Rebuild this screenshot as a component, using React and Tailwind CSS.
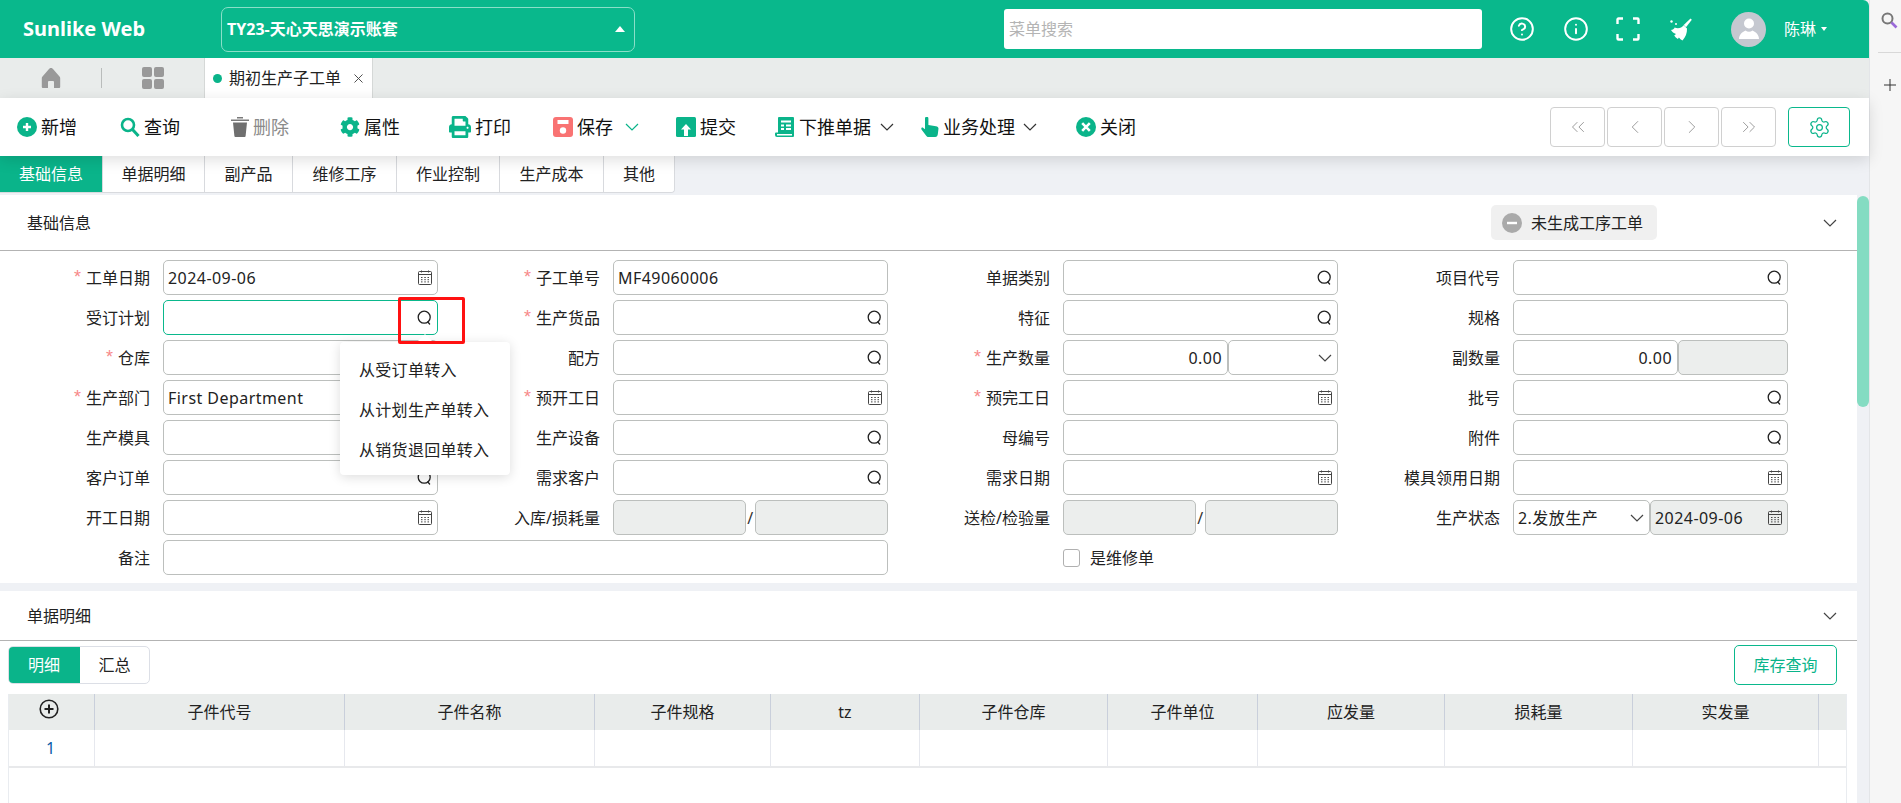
import React from 'react'
import { ChevronLeft, ChevronRight, ChevronsLeft, ChevronsRight, CircleHelp, Info, Settings, X } from 'lucide-react'
import { FaCog, FaPrint } from 'react-icons/fa'

const Chev = ({ color = '#333', className = '' }) => (
  <svg width="14" height="8" viewBox="0 0 14 8" fill="none" stroke={color} strokeWidth="1.2" className={`shrink-0 ${className}`}>
    <path d="M1 1l6 6 6-6" />
  </svg>
)

const SearchGlyph = () => (
  <svg width="15" height="15" viewBox="0 0 15 15" fill="none" stroke="#222" strokeWidth="1.3" className="shrink-0">
    <circle cx="7.200" cy="7.200" r="6" />
    <path d="M10.800 12l1.800 2" strokeLinecap="round" />
  </svg>
)

const CalendarGlyph = () => (
  <svg width="14" height="15" viewBox="0 0 14 15" fill="none" stroke="#444" strokeWidth="1" className="shrink-0">
    <rect x="0.500" y="1.500" width="13" height="13" rx="1" />
    <path d="M0.500 4.500h13M3.500 0.500v2M10.500 0.500v2" />
    <path d="M3 7.500h1.500M6.300 7.500h1.500M9.500 7.500h1.500M3 9.700h1.500M6.300 9.700h1.500M9.500 9.700h1.500M3 11.900h1.500M6.300 11.900h1.500M9.500 11.900h1.500" />
  </svg>
)

// toolbar icons
const IconAdd = () => (
  <svg width="20" height="20" viewBox="0 0 20 20">
    <circle cx="10" cy="10" r="10" fill="#0ab48a" />
    <path d="M10 6v8M6 10h8" stroke="#fff" strokeWidth="2.400" />
  </svg>
)
const IconQuery = () => (
  <svg width="20" height="20" viewBox="0 0 20 20" fill="none" stroke="#0ab48a">
    <circle cx="8" cy="8" r="6" strokeWidth="2.600" />
    <path d="M12.500 12.500l6 6.500" strokeWidth="3" />
  </svg>
)
const IconTrash = () => (
  <svg width="18" height="20" viewBox="0 0 18 20">
    <path d="M0 2.500h18v1.600H0zM6 0h6v1.600H6z" fill="#7a7a7a" />
    <path d="M2 5.500h14l-1.400 13.400a1 1 0 01-1 1H4.400a1 1 0 01-1-1z" fill="#6f6f6f" />
  </svg>
)
const IconSave = () => (
  <svg width="20" height="20" viewBox="0 0 20 20">
    <rect width="20" height="20" rx="3" fill="#f97373" />
    <rect x="4.500" y="3" width="11" height="4" fill="#fff" />
    <circle cx="10" cy="13.500" r="3.200" fill="#fff" />
  </svg>
)
const IconSubmit = () => (
  <svg width="20" height="20" viewBox="0 0 20 20">
    <rect width="20" height="20" rx="1.500" fill="#0ab48a" />
    <path d="M10 7l5 5.500h-3V19H8v-6.500H5z" fill="#fff" />
  </svg>
)
const IconPush = () => (
  <svg width="20" height="20" viewBox="0 0 20 20">
    <path d="M4 0h14a1 1 0 011 1v18a1 1 0 01-1 1H2a2 2 0 01-2-2v-1.500a1 1 0 011-1h2V1a1 1 0 011-1z" fill="#0ab48a" />
    <path d="M6 3.500h10v2H6zM6 7.500h3v2H6zM11 7.500h5v2h-5zM6 11h3v2H6zM11 11h5v2h-5zM2 17h15v1.400H2z" fill="#fff" />
  </svg>
)
const IconHand = () => (
  <svg width="18" height="20" viewBox="0 0 18 20">
    <path d="M4 1.500a1.700 1.700 0 013.400 0V8l7.600 1.200c1.400.3 2.500 1 2.500 2.400l-.7 5.600c-.2 1.600-1 2.800-2.600 2.800H7.500c-1 0-1.700-.5-2.300-1.300L.5 12.500c-.8-1.200.6-2.600 1.800-1.600L4 12.200z" fill="#0ab48a" />
  </svg>
)
const IconClose = () => (
  <svg width="20" height="20" viewBox="0 0 20 20">
    <circle cx="10" cy="10" r="10" fill="#0ab48a" />
    <path d="M6.200 6.200l7.600 7.600M13.800 6.200l-7.600 7.600" stroke="#fff" strokeWidth="2.600" />
  </svg>
)

const toolbar = [
  { w: 'w-[103px]', icon: <IconAdd />, label: '新增' },
  { w: 'w-[111px]', icon: <IconQuery />, label: '查询' },
  { w: 'w-[109px]', icon: <IconTrash />, label: '删除', muted: true },
  { w: 'w-[109px]', icon: <FaCog size={20} color="#0ab48a" />, label: '属性' },
  { w: 'w-[104px]', icon: <FaPrint size={22} color="#0ab48a" />, label: '打印' },
  { w: 'w-[123px]', icon: <IconSave />, label: '保存', caret: <Chev color="#0ab48a" className="ml-[8px]" /> },
  { w: 'w-[99px]', icon: <IconSubmit />, label: '提交' },
  { w: 'w-[146px]', icon: <IconPush />, label: '下推单据', caret: <Chev className="ml-[5px]" /> },
  { w: 'w-[155px]', icon: <IconHand />, label: '业务处理', caret: <Chev className="ml-[4px]" /> },
  { w: 'w-[70px]', icon: <IconClose />, label: '关闭' },
]

const pageTabs = [
  { label: '基础信息', w: 'w-[102px]', active: true },
  { label: '单据明细', w: 'w-[102px]' },
  { label: '副产品', w: 'w-[88px]' },
  { label: '维修工序', w: 'w-[104px]' },
  { label: '作业控制', w: 'w-[103px]' },
  { label: '生产成本', w: 'w-[104px]' },
  { label: '其他', w: 'w-[71px]' },
]

const columns = [
  { w: 'w-[250px]', label: '子件代号' },
  { w: 'w-[250px]', label: '子件名称' },
  { w: 'w-[176px]', label: '子件规格' },
  { w: 'w-[149px]', label: 'tz' },
  { w: 'w-[188px]', label: '子件仓库' },
  { w: 'w-[150px]', label: '子件单位' },
  { w: 'w-[187px]', label: '应发量' },
  { w: 'w-[188px]', label: '损耗量' },
  { w: 'w-[186px]', label: '实发量' },
  { w: 'flex-1', label: '' },
]

const Box = ({ value, icon, disabled, focus, right, className = 'flex-1' }) => (
  <div
    className={`${className} h-[35px] min-w-0 flex items-center pl-1 pr-[5px] rounded-[5px] border ${focus ? 'border-[#0ab88c]' : 'border-[#bcbfbd]'} ${disabled ? 'bg-[#eceeed]' : 'bg-white'}`}
  >
    <input
      readOnly
      defaultValue={value}
      className={`flex-1 min-w-0 bg-transparent outline-none text-[#222] tracking-[0.45px] ${right ? 'text-right' : ''}`}
    />
    {icon === 'search' && <SearchGlyph />}
    {icon === 'date' && <CalendarGlyph />}
    {icon === 'select' && <Chev color="#444" />}
  </div>
)

const Field = ({ label, req, span, children }) => (
  <div className={`flex items-center h-[35px] ${span ? 'col-span-2' : ''}`}>
    <div className="w-[150px] shrink-0 flex justify-end items-center text-[#222] whitespace-nowrap">
      {req && <span className="text-[#f78989] text-[18px] mr-[5px] font-['Liberation_Sans',sans-serif]">*</span>}
      {label}
    </div>
    <div className={`ml-[13px] flex items-center relative ${span ? 'w-[725px]' : 'w-[274.5px]'}`}>{children}</div>
  </div>
)

const Split = () => (
  <>
    <Box disabled className="w-[133px]" />
    <span className="w-[8.5px] text-center text-[#333]">/</span>
    <Box disabled className="w-[133px]" />
  </>
)

const OrderPlanField = () => (
  <Field label="受订计划">
    <Box focus icon="search" />
    {/* the popover hanging off the search icon */}
    <div className="absolute left-[177px] top-[42px] z-20 w-[170px] h-[133px] bg-white rounded-[4px] shadow-[0_2px_12px_rgba(0,0,0,0.14)] py-[8px] px-[19px] text-[#222] tracking-[0.3px]">
      <div className="absolute -top-[8px] left-[77px] w-0 h-0 border-x-[8px] border-x-transparent border-b-[8px] border-b-white" />
      <div className="h-[40px] flex items-center">从受订单转入</div>
      <div className="h-[40px] flex items-center whitespace-nowrap">从计划生产单转入</div>
      <div className="h-[40px] flex items-center whitespace-nowrap">从销货退回单转入</div>
    </div>
    {/* red annotation box */}
    <div className="absolute left-[235px] -top-[3px] z-30 w-[67px] h-[47px] border-[3px] border-[#f11] rounded-[2px]" />
  </Field>
)

const SectionHead = ({ title, height, children }) => (
  <div className={`${height} flex items-center pl-[27px] pr-[20px] border-b border-[#b3b3b3] text-[#222]`}>
    <span className="flex-1">{title}</span>
    {children}
    <Chev color="#444" className="ml-[166px]" />
  </div>
)

export default function App() {
  return (
    <div className="flex w-[1901px] h-[803px] overflow-hidden bg-[#f6f6f6] font-['Noto_Sans','Noto_Sans_CJK_SC',sans-serif] text-[16px]">
      <div className="w-[1870px] shrink-0 flex flex-col bg-[#eff1f5] border-r border-[#e3e5e8]">
        {/* Header */}
        <div className="h-[58px] shrink-0 bg-[#09b88c] rounded-tr-[6px] flex items-center text-white">
          <div className="w-[221px] pl-[23px] text-[20px] font-bold">Sunlike Web</div>
          <div className="w-[414px] h-[45px] border border-[#8adfc8] rounded-[7px] flex items-center pl-[5px] pr-[9px] font-bold">
            <span className="flex-1">TY23-天心天思演示账套</span>
            <span className="w-0 h-0 border-x-[5px] border-x-transparent border-b-[6px] border-b-white" />
          </div>
          <div className="ml-[369px] w-[478px] h-[40px] bg-white rounded-[3px] flex items-center pl-[5px] text-[#b4b4b4]">菜单搜索</div>
          <CircleHelp size={26} strokeWidth={1.8} className="ml-[27px]" />
          <Info size={26} strokeWidth={1.8} className="ml-[28px]" />
          <svg width="24" height="24" viewBox="0 0 24 24" fill="none" stroke="#fff" strokeWidth="2.400" className="ml-[27px]">
            <path d="M1.500 7V2.500a1 1 0 011-1H7M17 1.500h4.500a1 1 0 011 1V7M22.500 17v4.500a1 1 0 01-1 1H17M7 22.500H2.500a1 1 0 01-1-1V17" />
          </svg>
          <svg width="22" height="23" viewBox="0 0 22 23" fill="#fff" className="ml-[30px]">
            <path d="M20.500 0.500l1.300 1.300-5.800 7.400-2.300-2.300z" />
            <path d="M4.500 9.500c3.800 1.500 7 .5 9.200-2.300l3.300 3.300c.2 4.500-1.400 8.500-4.500 12-1.500-.7-2.700-1.700-3.600-2.900l-1 1.300c-1.600-.8-2.800-1.900-3.700-3.300l1.800-1.600c-2.200-.7-4-2-5-3.900 1.400-.2 2.700-1 3.500-2.100z" />
            <circle cx="1.500" cy="3.500" r="1.200" />
            <circle cx="6" cy="6" r="1" />
          </svg>
          <div className="ml-[39px] w-[35px] h-[35px] rounded-full bg-[#c5c8d0] flex items-center justify-center">
            <svg width="22" height="24" viewBox="0 0 22 24" fill="#fff">
              <circle cx="11" cy="6.500" r="5" />
              <path d="M1 22c0-4 3-7 6.500-8.500 2 1.600 5 1.600 7 0C18 15 21 18 21 22z" />
            </svg>
          </div>
          <span className="ml-[18px]">陈琳</span>
          <span className="ml-[5px] w-0 h-0 border-x-[3.5px] border-x-transparent border-t-[4px] border-t-white" />
        </div>

        {/* Open pages */}
        <div className="h-[40px] shrink-0 bg-[#e9eceb] flex items-center">
          <div className="w-[101px] flex justify-center">
            <svg width="20" height="20" viewBox="0 0 20 20" fill="#999">
              <path d="M10 0c1 0 1.500.5 2 1l6.500 7.500c.5.5.7 1 .7 1.700V19a1 1 0 01-1 1H13v-6a1 1 0 00-1-1H8a1 1 0 00-1 1v6H1.800a1 1 0 01-1-1v-8.800c0-.7.2-1.200.7-1.700L8 1c.5-.5 1-1 2-1z" />
            </svg>
          </div>
          <div className="w-px h-[20px] bg-[#b9bcbb]" />
          <div className="w-[102px] flex justify-center">
            <div className="grid grid-cols-2 gap-[2px]">
              <div className="w-[10px] h-[10px] rounded-[2px] bg-[#999]" />
              <div className="w-[10px] h-[10px] rounded-[2px] bg-[#999]" />
              <div className="w-[10px] h-[10px] rounded-[2px] bg-[#999]" />
              <div className="w-[10px] h-[10px] rounded-[2px] bg-[#999]" />
            </div>
          </div>
          <div className="w-[169px] h-full bg-white border-x border-[#d5d8d7] flex items-center pl-[8px] text-[#222]">
            <span className="w-[9px] h-[9px] rounded-full bg-[#0ab48a] mr-[7px]" />
            期初生产子工单
            <X size={15} color="#444" strokeWidth={1.5} className="ml-[10px]" />
          </div>
        </div>

        {/* Toolbar */}
        <div className="h-[58px] shrink-0 bg-white relative z-10 shadow-[0_4px_14px_rgba(0,0,0,0.13)] flex items-center pl-[17px] pr-[19px] text-[18px] text-[#111]">
          {toolbar.map((t) => (
            <div key={t.label} className={`${t.w} flex items-center gap-[4px] shrink-0 ${t.muted ? 'text-[#8a8a8a]' : ''}`}>
              {t.icon}
              <span>{t.label}</span>
              {t.caret}
            </div>
          ))}
          <div className="ml-auto flex items-center">
            <div className="flex gap-[2px] text-[#888]">
              <div className="w-[55px] h-[40px] border border-[#d0d0d0] rounded-[4px] flex items-center justify-center"><ChevronsLeft size={22} strokeWidth={0.9} /></div>
              <div className="w-[55px] h-[40px] border border-[#d0d0d0] rounded-[4px] flex items-center justify-center"><ChevronLeft size={22} strokeWidth={0.9} /></div>
              <div className="w-[55px] h-[40px] border border-[#d0d0d0] rounded-[4px] flex items-center justify-center"><ChevronRight size={22} strokeWidth={0.9} /></div>
              <div className="w-[55px] h-[40px] border border-[#d0d0d0] rounded-[4px] flex items-center justify-center"><ChevronsRight size={22} strokeWidth={0.9} /></div>
            </div>
            <div className="ml-[12px] w-[62px] h-[40px] border border-[#0ab88c] rounded-[4px] flex items-center justify-center">
              <Settings size={23} color="#0ab48a" strokeWidth={1.3} />
            </div>
          </div>
        </div>

        {/* Page tabs */}
        <div className="h-[37px] shrink-0 flex mb-[2px]">
          <div className="flex rounded-br-[4px] overflow-hidden border-b border-r border-[#d8dade]">
            {pageTabs.map((t) => (
              <div
                key={t.label}
                className={`${t.w} flex items-center justify-center ${t.active ? 'bg-[#0ab48a] text-white' : 'bg-white text-[#222] border-l border-[#d8dade]'}`}
              >
                {t.label}
              </div>
            ))}
          </div>
        </div>

        <div className="flex-1 min-h-0 flex">
          <div className="w-[1857px] shrink-0 flex flex-col">
            {/* Basic info */}
            <div className="bg-white h-[388px] shrink-0">
              <SectionHead title="基础信息" height="h-[56px]">
                <div className="w-[166px] h-[35px] bg-[#f0f0f0] rounded-[5px] flex items-center pl-[11px] text-[#222]">
                  <svg width="20" height="20" viewBox="0 0 20 20" className="mr-[9px]">
                    <circle cx="10" cy="10" r="10" fill="#aaa" />
                    <rect x="5" y="8.800" width="10" height="2.400" fill="#fff" />
                  </svg>
                  未生成工序工单
                </div>
              </SectionHead>
              <div className="pt-[9px] grid grid-cols-[repeat(4,450px)] gap-y-[5px]">
                <Field label="工单日期" req><Box value="2024-09-06" icon="date" /></Field>
                <Field label="子工单号" req><Box value="MF49060006" /></Field>
                <Field label="单据类别"><Box icon="search" /></Field>
                <Field label="项目代号"><Box icon="search" /></Field>

                <OrderPlanField />
                <Field label="生产货品" req><Box icon="search" /></Field>
                <Field label="特征"><Box icon="search" /></Field>
                <Field label="规格"><Box /></Field>

                <Field label="仓库" req><Box icon="search" /></Field>
                <Field label="配方"><Box icon="search" /></Field>
                <Field label="生产数量" req>
                  <Box value="0.00" right className="w-[165px]" />
                  <Box icon="select" className="w-[109.5px]" />
                </Field>
                <Field label="副数量">
                  <Box value="0.00" right className="w-[165px]" />
                  <Box disabled className="w-[109.5px]" />
                </Field>

                <Field label="生产部门" req><Box value="First Department" icon="search" /></Field>
                <Field label="预开工日" req><Box icon="date" /></Field>
                <Field label="预完工日" req><Box icon="date" /></Field>
                <Field label="批号"><Box icon="search" /></Field>

                <Field label="生产模具"><Box icon="search" /></Field>
                <Field label="生产设备"><Box icon="search" /></Field>
                <Field label="母编号"><Box /></Field>
                <Field label="附件"><Box icon="search" /></Field>

                <Field label="客户订单"><Box icon="search" /></Field>
                <Field label="需求客户"><Box icon="search" /></Field>
                <Field label="需求日期"><Box icon="date" /></Field>
                <Field label="模具领用日期"><Box icon="date" /></Field>

                <Field label="开工日期"><Box icon="date" /></Field>
                <Field label="入库/损耗量"><Split /></Field>
                <Field label="送检/检验量"><Split /></Field>
                <Field label="生产状态">
                  <Box value="2.发放生产" icon="select" className="w-[137px]" />
                  <Box value="2024-09-06" icon="date" disabled className="w-[137.5px]" />
                </Field>

                <Field label="备注" span><Box /></Field>
                <div className="col-span-2 flex items-center h-[35px] pl-[163px] text-[#222]">
                  <span className="w-[17px] h-[18px] border border-[#b0b0b0] rounded-[3px] mr-[10px]" />
                  是维修单
                </div>
              </div>
            </div>

            {/* Detail */}
            <div className="bg-white mt-[8px] flex-1 min-h-0">
              <SectionHead title="单据明细" height="h-[50px]" />
              <div className="flex items-start justify-between pl-[8px] pr-[20px] pt-[5px]">
                <div className="flex h-[38px] w-[142px] border border-[#dcdfe6] rounded-[5px] overflow-hidden">
                  <div className="w-[72px] -my-px -ml-px bg-[#0ab48a] text-white flex items-center justify-center">明细</div>
                  <div className="flex-1 flex items-center justify-center text-[#222]">汇总</div>
                </div>
                <div className="w-[103px] h-[40px] -mt-px border border-[#0ab88c] rounded-[5px] text-[#0ab48a] flex items-center justify-center">库存查询</div>
              </div>
              <div className="mt-[9px] ml-[8px] w-[1839px] h-[200px] border-x border-[#e9ecf0]">
                <div className="h-[36px] bg-[#e9eceb] flex text-[#222]">
                  <div className="w-[86px] flex justify-center pt-[5px] pr-[6px] border-r border-[#c9cfdb]">
                    <svg width="20" height="20" viewBox="0 0 20 20" fill="none" stroke="#222" strokeWidth="1.600">
                      <circle cx="10" cy="10" r="8.800" />
                      <path d="M10 5.500v9M5.500 10h9" strokeWidth="2" />
                    </svg>
                  </div>
                  {columns.map((c, i) => (
                    <div key={i} className={`${c.w} flex items-center justify-center border-r border-[#c9cfdb] last:border-r-0`}>{c.label}</div>
                  ))}
                </div>
                <div className="h-[38px] flex border-b-2 border-[#e8e9eb]">
                  <div className="w-[86px] flex items-center justify-center pr-[2px] text-[#0a5aa8] border-r border-[#e6e8ee]">1</div>
                  {columns.map((c, i) => (
                    <div key={i} className={`${c.w} border-r border-[#e6e8ee] last:border-r-0`} />
                  ))}
                </div>
              </div>
            </div>
          </div>

          {/* Scrollbar */}
          <div className="flex-1 pt-[1px]">
            <div className="w-[12px] h-[211px] rounded-full bg-[#84dcc2]" />
          </div>
        </div>
      </div>

      {/* Side strip */}
      <div className="flex-1 flex flex-col items-center pl-[8px]">
        <svg width="17" height="18" viewBox="0 0 17 18" fill="none" className="mt-[12px] shrink-0">
          <circle cx="6.500" cy="6.500" r="5" stroke="#777" strokeWidth="2" />
          <path d="M10.500 10.500l5 5" stroke="#9a6ad8" strokeWidth="2.600" />
        </svg>
        <div className="mt-[22px] w-full h-px bg-[#d8d8d8]" />
        <svg width="14" height="14" viewBox="0 0 14 14" stroke="#333" strokeWidth="1" className="mt-[25px]">
          <path d="M7 1v12M1 7h12" />
        </svg>
      </div>
    </div>
  )
}
